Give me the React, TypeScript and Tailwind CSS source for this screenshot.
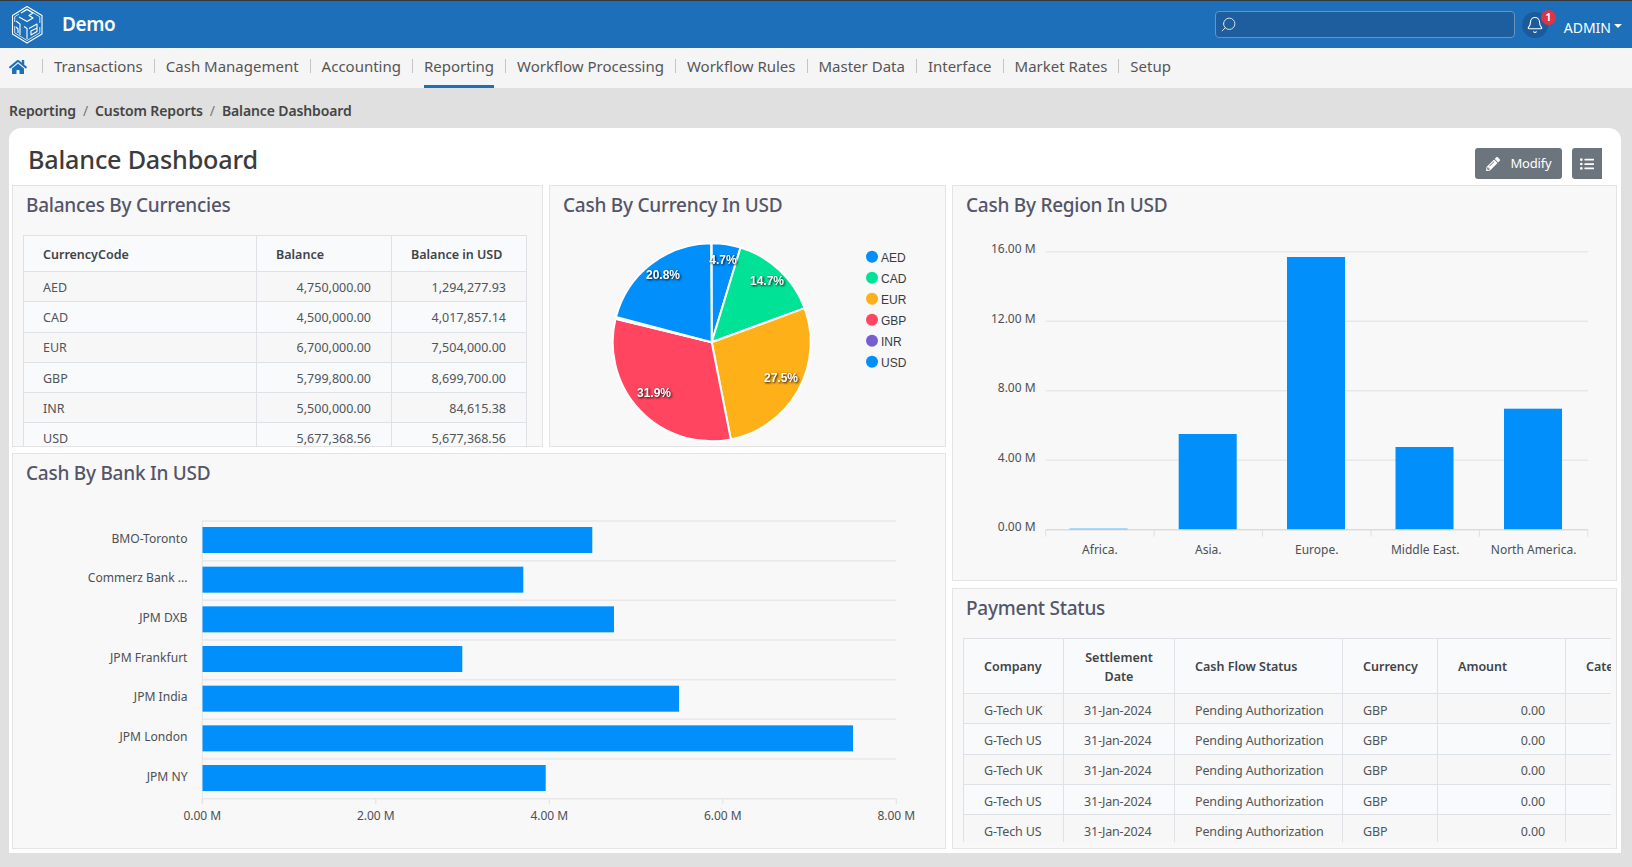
import { FaHome, FaListUl, FaPencilAlt } from "react-icons/fa"
import { Bell, Search } from "lucide-react"

const nav = ["Transactions", "Cash Management", "Accounting", "Reporting", "Workflow Processing", "Workflow Rules", "Master Data", "Interface", "Market Rates", "Setup"]

const currencies = [
  ["AED", "4,750,000.00", "1,294,277.93"],
  ["CAD", "4,500,000.00", "4,017,857.14"],
  ["EUR", "6,700,000.00", "7,504,000.00"],
  ["GBP", "5,799,800.00", "8,699,700.00"],
  ["INR", "5,500,000.00", "84,615.38"],
  ["USD", "5,677,368.56", "5,677,368.56"],
]

const payments = ["G-Tech UK", "G-Tech US", "G-Tech UK", "G-Tech US", "G-Tech US"]

const slices = [
  { name: "AED", pct: 4.7, color: "#008ffb" },
  { name: "CAD", pct: 14.7, color: "#00e396" },
  { name: "EUR", pct: 27.5, color: "#feb019" },
  { name: "GBP", pct: 31.9, color: "#ff4560" },
  { name: "INR", pct: 0.3, color: "#775dd0" },
  { name: "USD", pct: 20.8, color: "#008ffb" },
]

const pieLabels = [
  ["4.7%", 723, 264],
  ["14.7%", 767, 285],
  ["27.5%", 781, 382],
  ["31.9%", 654, 397],
  ["20.8%", 663, 279],
] as const

const banks = [
  ["BMO-Toronto", 592.3],
  ["Commerz Bank ...", 523.3],
  ["JPM DXB", 614],
  ["JPM Frankfurt", 462.3],
  ["JPM India", 679],
  ["JPM London", 853],
  ["JPM NY", 545.7],
] as const

const regions = [
  ["Africa.", 1069.6, 528.7],
  ["Asia.", 1178.7, 434],
  ["Europe.", 1287, 257],
  ["Middle East.", 1395.5, 447],
  ["North America.", 1504, 408.7],
] as const

function wedge(start: number, end: number) {
  const cx = 711.7
  const cy = 342.3
  const r = 99
  const a = (start / 100) * Math.PI * 2
  const b = (end / 100) * Math.PI * 2
  const large = end - start > 50 ? 1 : 0
  return `M${cx} ${cy}L${cx + r * Math.sin(a)} ${cy - r * Math.cos(a)}A${r} ${r} 0 ${large} 1 ${cx + r * Math.sin(b)} ${cy - r * Math.cos(b)}Z`
}

const Logo = () => (
  <svg width="32" height="40" viewBox="11 3 32 40" fill="none" stroke="white" strokeWidth="1.1" strokeLinejoin="round">
    <path d="M27 4.5 42 13.5V32L27 41 12.500 32V13.500Z" />
    <path d="M23 9.500 27 7 39.800 14.800V21M39.800 25V30.800L27 38.500 14.700 30.800V24M14.700 20V14.800L19 12" strokeWidth="0.8" />
    <path d="M21 11 27 7.500 33 11 29 13.500 33 16 27 19.500 19 15" />
    <path d="M16 19 20 22V33M24 24.500 27 26.500V37M16 25 18 27V31" />
    <path d="M29 26.500 37 22V26L31 29V33L37 29.500V25.500" />
  </svg>
)

const Panel = ({ title, className, children }: { title: string; className: string; children: React.ReactNode }) => (
  <section className={`border border-[#e4e4e4] bg-[#f8f8f8] overflow-hidden ${className}`}>
    <h2 className="h-[38px] pl-[13px] flex items-center text-[19px] tracking-[-0.25px] font-medium text-[#555569]">{title}</h2>
    {children}
  </section>
)

export default function App() {
  return (
    <div className="h-[867px] w-full overflow-hidden bg-[#e0e0e0] font-['Noto_Sans',sans-serif]">
      {/* Top bar */}
      <header className="h-[48px] border-t border-[#33383d] bg-[#1c6fb8] flex items-center text-white">
        <div className="ml-[11px] flex items-center">
          <Logo />
          <span className="ml-[19px] text-[19px] font-semibold tracking-[-0.4px]">Demo</span>
        </div>
        <div className="ml-auto flex items-center">
          <div className="w-[300px] h-[27px] rounded-[4px] border border-[#6a93bd] bg-[#1e5d9e] flex items-center pl-[4px]">
            <Search className="w-[17px] h-[17px] -scale-x-100 text-[#d5e2ef]" strokeWidth={1.4} />
          </div>
          <div className="relative ml-[7px] w-[26px] h-[26px] rounded-full bg-[#1b5a9b] flex items-center justify-center">
            <Bell className="w-[18px] h-[18px]" strokeWidth={1.5} />
            <span className="absolute -top-[2px] -right-[8px] w-[15px] h-[15px] rounded-full bg-[#dc3545] text-[10px] font-bold flex items-center justify-center">1</span>
          </div>
          <span className="ml-[16px] text-[14px] mt-[5px]">ADMIN</span>
          <span className="ml-[3px] mr-[10px] mt-[2px] border-x-[4px] border-t-[4px] border-x-transparent border-t-white" />
        </div>
      </header>

      {/* Main menu */}
      <nav className="h-[40px] bg-[#f5f5f5] flex items-stretch pl-[9px] text-[15px] text-[#555]">
        <div className="flex items-center w-[33px] pb-[3px]">
          <FaHome className="w-[18px] h-[18px] text-[#1c6fb8]" />
        </div>
        {nav.map((item) => (
          <div key={item} className="flex items-center">
            <span className="w-px h-[14px] mb-[4px] bg-[#c4c4c4]" />
            <a className={`mx-[11px] h-full flex items-center ${item === "Reporting" ? "border-b-[3px] border-[#1c6fb8] pb-[1px]" : "pb-[4px]"}`}>{item}</a>
          </div>
        ))}
      </nav>

      {/* Breadcrumb */}
      <div className="h-[40px] pl-[9px] pt-[4px] flex items-center text-[14px] tracking-[-0.12px] font-semibold text-[#454545]">
        <span>Reporting</span>
        <span className="mx-[7px] font-normal text-[#777]">/</span>
        <span>Custom Reports</span>
        <span className="mx-[7px] font-normal text-[#777]">/</span>
        <span>Balance Dashboard</span>
      </div>

      {/* Card */}
      <main className="ml-[9px] w-[1612px] h-[725px] rounded-t-xl bg-white">
        <div className="h-[57px] pl-[19px] pr-[19px] flex items-center justify-between">
          <h1 className="text-[25.200px] font-medium tracking-[-0.2px] text-[#3b3b3b] mt-[7px]">Balance Dashboard</h1>
          <div className="flex gap-[10px] mt-[20px] self-start">
            <button className="w-[87px] h-[31px] rounded-[3px] bg-[#6c757d] text-white text-[13px] tracking-[-0.2px] flex items-center justify-center gap-[11px]">
              <FaPencilAlt className="w-[14px] h-[14px]" />
              Modify
            </button>
            <button className="w-[30px] h-[31px] rounded-l-[3px] bg-[#6c757d] text-white flex items-center justify-center">
              <FaListUl className="w-[14px] h-[14px]" />
            </button>
          </div>
        </div>

        <div className="flex gap-[6px] pl-[3px]">
          <div className="w-[934px] flex flex-col gap-[6px]">
            <div className="flex gap-[6px]">
              <Panel title="Balances By Currencies" className="w-[531px] h-[262px]">
                <div className="mt-[11px] ml-[10px]">
                  <table className="w-[504px] table-fixed border-collapse text-[12.500px] text-[#50555a]">
                    <thead>
                      <tr className="h-[36px] bg-[#f9fafb] text-[#3f444a]">
                        <th className="w-[233px] border border-[#dee2e6] pl-[19px] pt-[3px] text-left font-semibold">CurrencyCode</th>
                        <th className="w-[135px] border border-[#dee2e6] pl-[19px] pt-[3px] text-left font-semibold">Balance</th>
                        <th className="border border-[#dee2e6] pl-[19px] pt-[3px] text-left font-semibold">Balance in USD</th>
                      </tr>
                    </thead>
                    <tbody>
                      {currencies.map((row, i) => (
                        <tr key={row[0]} className={`h-[30.300px] ${i % 2 ? "bg-[#f9fafb]" : "bg-[#f7f7f7]"}`}>
                          <td className="border border-[#dee2e6] pl-[19px] pt-[3px]">{row[0]}</td>
                          <td className="border border-[#dee2e6] pr-[20px] pt-[3px] text-right">{row[1]}</td>
                          <td className="border border-[#dee2e6] pr-[20px] pt-[3px] text-right">{row[2]}</td>
                        </tr>
                      ))}
                    </tbody>
                  </table>
                </div>
              </Panel>

              <Panel title="Cash By Currency In USD" className="w-[397px] h-[262px]">
                <svg width="395" height="222" viewBox="550 224 395 222" className="block">
                  {slices.map((s, i) => {
                    const start = slices.slice(0, i).reduce((t, x) => t + x.pct, 0)
                    return <path key={s.name} d={wedge(start, start + s.pct)} fill={s.color} stroke="white" strokeWidth="2" />
                  })}
                  {pieLabels.map(([t, x, y]) => (
                    <text key={t} x={x} y={y} textAnchor="middle" fontSize="12" fontWeight="700" fontFamily="Liberation Sans" fill="white" className="drop-shadow-[1px_1px_1px_rgba(0,0,0,0.9)]">{t}</text>
                  ))}
                  {slices.map((s, i) => (
                    <g key={s.name}>
                      <circle cx="872" cy={256.700 + i * 21} r="6" fill={s.color} />
                      <text x="881" y={261.500 + i * 21} fontSize="12" fontFamily="Liberation Sans" fill="#373d3f">{s.name}</text>
                    </g>
                  ))}
                </svg>
              </Panel>
            </div>

            <Panel title="Cash By Bank In USD" className="w-[934px] h-[396px]">
              <svg width="932" height="356" viewBox="13 492 932 356" className="block">
                {[0, 1, 2, 3, 4, 5, 6, 7].map((i) => (
                  <line key={i} x1="202" x2="896.300" y1={521 + i * 39.670} y2={521 + i * 39.670} stroke="#e8e8e8" strokeWidth="1.500" />
                ))}
                <line x1="202.300" x2="202.300" y1="521" y2="804" stroke="#e4e4e4" />
                {[0, 1, 2, 3, 4].map((i) => (
                  <g key={i}>
                    <line x1={202.300 + i * 173.500} x2={202.300 + i * 173.500} y1="798.700" y2="804" stroke="#e0e0e0" />
                    <text x={202.300 + i * 173.500} y="819.500" textAnchor="middle" fontSize="12" fill="#4b5055">{`${(i * 2).toFixed(2)} M`}</text>
                  </g>
                ))}
                {banks.map(([name, end], i) => (
                  <g key={name}>
                    <rect x="202.500" y={527 + i * 39.670} width={end - 202.500} height="26" fill="#008ffb" />
                    <text x="187.500" y={542.500 + i * 39.670} textAnchor="end" fontSize="12.100" fill="#4b5055">{name}</text>
                  </g>
                ))}
              </svg>
            </Panel>
          </div>

          <div className="w-[665px] flex flex-col gap-[7px]">
            <Panel title="Cash By Region In USD" className="w-[665px] h-[396px]">
              <svg width="663" height="356" viewBox="953 224 663 356" className="block">
                {[0, 1, 2, 3, 4].map((i) => (
                  <g key={i}>
                    <line x1="1045.700" x2="1587.800" y1={251.700 + i * 69.500} y2={251.700 + i * 69.500} stroke={i === 4 ? "#dcdcdc" : "#e8e8e8"} strokeWidth="1.500" />
                    <text x="1035.600" y={253 + i * 69.500} textAnchor="end" fontSize="12" fill="#4b5055">{`${(16 - i * 4).toFixed(2)} M`}</text>
                  </g>
                ))}
                {[0, 1, 2, 3, 4, 5].map((i) => (
                  <line key={i} x1={1045.700 + i * 108.420} x2={1045.700 + i * 108.420} y1="529.700" y2="536.700" stroke="#e0e0e0" />
                ))}
                {regions.map(([name, x, top], i) => (
                  <g key={name}>
                    <rect x={x} y={top} width="58" height={529.200 - top} fill="#008ffb" />
                    <text x={1099.900 + i * 108.420} y="553.500" textAnchor="middle" fontSize="12" fill="#4b5055">{name}</text>
                  </g>
                ))}
              </svg>
            </Panel>

            <Panel title="Payment Status" className="w-[665px] h-[261px]">
              <div className="mt-[11px] ml-[10px] w-[648px] h-[204px] overflow-hidden">
                <table className="w-[760px] table-fixed border-collapse text-[12.500px] text-[#50555a]">
                  <thead>
                    <tr className="h-[55px] bg-[#f9fafb] text-[#3f444a]">
                      <th className="w-[100px] border border-[#dee2e6] pl-[20px] pt-[2px] text-left font-semibold">Company</th>
                      <th className="w-[111px] border border-[#dee2e6] px-[20px] pt-[2px] text-center font-semibold leading-[19px]">Settlement Date</th>
                      <th className="w-[168px] border border-[#dee2e6] pl-[20px] pt-[2px] text-left font-semibold">Cash Flow Status</th>
                      <th className="w-[95px] border border-[#dee2e6] pl-[20px] pt-[2px] text-left font-semibold">Currency</th>
                      <th className="w-[128px] border border-[#dee2e6] pl-[20px] pt-[2px] text-left font-semibold">Amount</th>
                      <th className="border border-[#dee2e6] pl-[20px] pt-[2px] text-left font-semibold">Category</th>
                    </tr>
                  </thead>
                  <tbody>
                    {payments.map((company, i) => (
                      <tr key={i} className={`h-[30.300px] tracking-[-0.15px] ${i % 2 ? "bg-[#f9fafb]" : "bg-[#f7f7f7]"}`}>
                        <td className="border border-[#dee2e6] pl-[20px] pt-[5px]">{company}</td>
                        <td className="border border-[#dee2e6] pl-[20px] pt-[5px]">31-Jan-2024</td>
                        <td className="border border-[#dee2e6] pl-[20px] pt-[5px]">Pending Authorization</td>
                        <td className="border border-[#dee2e6] pl-[20px] pt-[5px]">GBP</td>
                        <td className="border border-[#dee2e6] pr-[20px] pt-[5px] text-right">0.00</td>
                        <td className="border border-[#dee2e6]" />
                      </tr>
                    ))}
                  </tbody>
                </table>
              </div>
            </Panel>
          </div>
        </div>
      </main>
    </div>
  )
}
